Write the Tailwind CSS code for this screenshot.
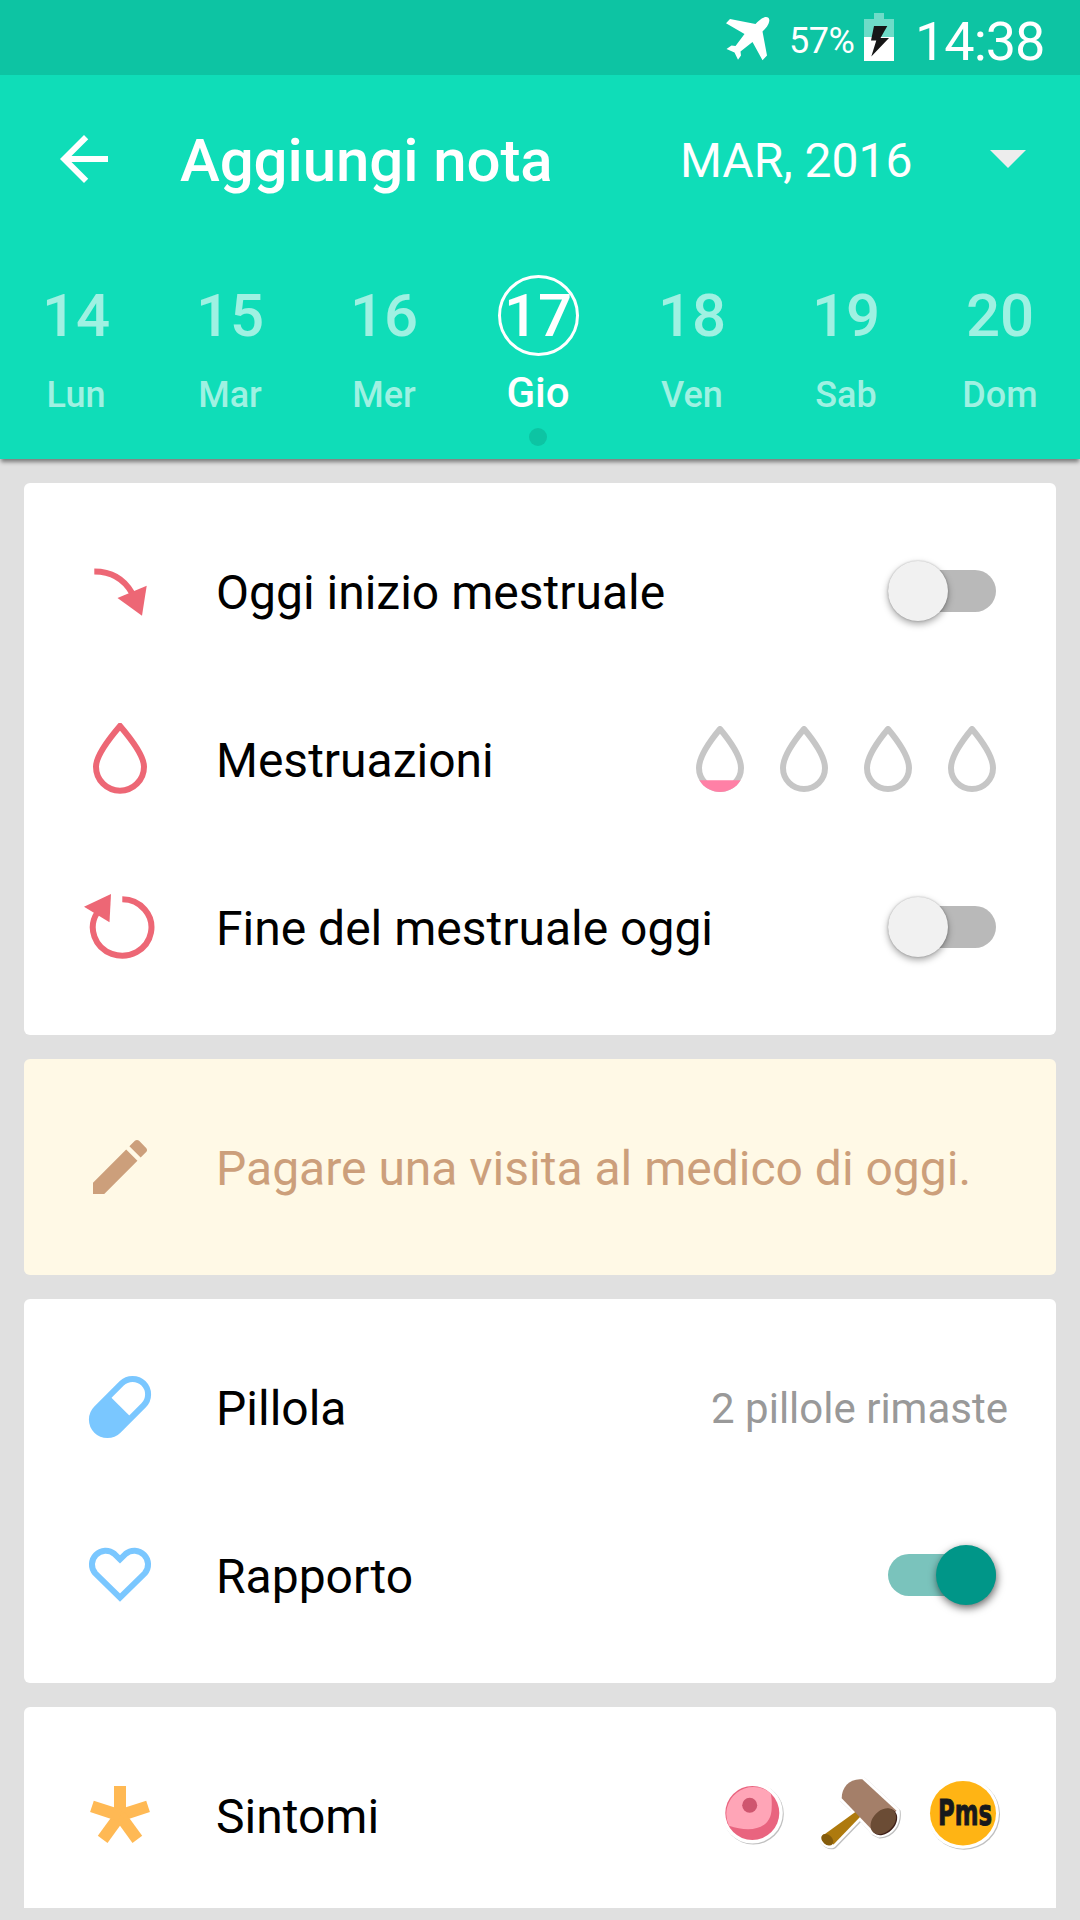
<!DOCTYPE html>
<html lang="it">
<head>
    <meta charset="UTF-8">
    <meta name="viewport" content="width=device-width, initial-scale=1.0">
    <title>Aggiungi nota</title>
    <script src="https://cdn.jsdelivr.net/npm/@tailwindcss/browser@4"></script>
    <style>
        body {
            font-family: Roboto, 'Noto Sans', sans-serif;
        }
    </style>
</head>
<body class="bg-[#e0e0e0] w-[1080px] h-[1920px] overflow-hidden text-black">
    <!-- Goccia condivisa -->
    <svg width="0" height="0" class="absolute">
        <symbol id="goccia" viewBox="0 0 48 66">
            <path d="M24 3C19 9 3 29 3 42A21 21 0 0 0 45 42C45 29 29 9 24 3Z" fill="none" stroke="#c6c6c6" stroke-width="6" stroke-linejoin="round"/>
        </symbol>
    </svg>

    <!-- Barra di stato -->
    <div class="bg-[#0dc4a3] h-[75px] flex items-start text-white pl-[726px]">
        <svg class="w-[44px] h-[44px] mt-[17px]" viewBox="0 0 44 44" fill="#fff">
            <path d="M0 6.300L4 2L29.500 7C32 4.500 35 1.500 38 .5C41 -.7 43.800 .8 43.300 4C42.800 8 40 11 36.500 14.500L41 38.500L36.500 43.300L26.500 25L14.500 34.500L15 38.500L12 42.700L8.500 35.500L.5 32L5.500 28.500L9.500 29L18.500 17L0 6.300Z"/>
        </svg>
        <span class="text-[36px] leading-[42px] tracking-[-0.5px] mt-[20px] ml-[19px] w-[75px]">57%</span>
        <svg class="w-[30px] h-[48px] mt-[13px]" viewBox="0 0 30 48">
            <path d="M10 0H20V6H30V24H0V6H10Z" fill="#6edcc8"/>
            <path d="M0 24H30V48H0Z" fill="#fff"/>
            <path d="M10 13H23.300L16.500 25H25L7.300 43.500L12.300 27.500H7Z" fill="#161616"/>
        </svg>
        <span class="text-[54px] leading-[64px] tracking-[-1px] mt-[10px] ml-[21px]">14:38</span>
    </div>

    <!-- Intestazione -->
    <header class="bg-[#0fddb8] h-[384px] text-white shadow-[0_4px_4px_-1px_rgba(0,0,0,0.45)]">
        <div class="h-[168px] flex items-center pl-[48px]">
            <svg class="w-[72px] h-[72px]" viewBox="0 0 24 24" fill="#fff">
                <path d="M20 11H7.830l5.590-5.590L12 4l-8 8 8 8 1.410-1.410L7.830 13H20v-2z"/>
            </svg>
            <h1 class="text-[60px] font-medium tracking-[-0.1px] ml-[60px] w-[500px] pt-[4px]">Aggiungi nota</h1>
            <span class="text-[48px] w-[310px] pt-[4px]">MAR, 2016</span>
            <svg class="w-[36px] h-[18px]" viewBox="0 0 36 18" fill="#ededed">
                <path d="M0 0H36L18 18Z"/>
            </svg>
        </div>

        <div class="flex pt-[32px] -ml-px text-[#9ff1e2] font-medium text-[36px]">
            <div class="w-[154px] flex flex-col items-center">
                <div class="size-[81px] flex items-center justify-center text-[60px]">14</div>
                <div class="mt-[15px] leading-[48px]">Lun</div>
            </div>
            <div class="w-[154px] flex flex-col items-center">
                <div class="size-[81px] flex items-center justify-center text-[60px]">15</div>
                <div class="mt-[15px] leading-[48px]">Mar</div>
            </div>
            <div class="w-[154px] flex flex-col items-center">
                <div class="size-[81px] flex items-center justify-center text-[60px]">16</div>
                <div class="mt-[15px] leading-[48px]">Mer</div>
            </div>
            <div class="w-[154px] flex flex-col items-center text-white">
                <div class="size-[81px] rounded-full border-[3px] border-white flex items-center justify-center text-[60px]">17</div>
                <div class="mt-[13px] leading-[48px] text-[42px]">Gio</div>
                <div class="mt-[11px] size-[18px] rounded-full bg-[#0dc4a3]"></div>
            </div>
            <div class="w-[154px] flex flex-col items-center">
                <div class="size-[81px] flex items-center justify-center text-[60px]">18</div>
                <div class="mt-[15px] leading-[48px]">Ven</div>
            </div>
            <div class="w-[154px] flex flex-col items-center">
                <div class="size-[81px] flex items-center justify-center text-[60px]">19</div>
                <div class="mt-[15px] leading-[48px]">Sab</div>
            </div>
            <div class="w-[154px] flex flex-col items-center">
                <div class="size-[81px] flex items-center justify-center text-[60px]">20</div>
                <div class="mt-[15px] leading-[48px]">Dom</div>
            </div>
        </div>
    </header>

    <main class="px-6 pt-6 flex flex-col gap-6 text-[48px]">
        <!-- Ciclo -->
        <section class="bg-white rounded-[6px] py-6">
            <div class="h-[168px] flex items-center pl-[60px] pr-[60px]">
                <svg class="w-[72px] h-[72px]" viewBox="0 0 72 72">
                    <path d="M10.300 16.500C27 16.500 40 24 48 38" fill="none" stroke="#ed6775" stroke-width="6"/>
                    <path d="M33.500 43L62.700 30.700L58 60.700Z" fill="#ed6775"/>
                </svg>
                <span class="ml-[60px] pt-[3px] flex-1">Oggi inizio mestruale</span>
                <div class="w-[108px] h-[42px] rounded-full bg-[#b9b9b9] flex items-center">
                    <div class="size-[60px] shrink-0 rounded-full bg-[#f1f1f1] shadow-[0_3px_7px_rgba(0,0,0,0.35),0_0_2px_rgba(0,0,0,0.25)]"></div>
                </div>
            </div>
            <div class="h-[168px] flex items-center pl-[60px] pr-[60px]">
                <svg class="w-[72px] h-[72px]" viewBox="0 0 72 72">
                    <path d="M36 3C30 10 12 31 12 43.700A24 24 0 0 0 60 43.700C60 31 42 10 36 3Z" fill="none" stroke="#ed6775" stroke-width="6"/>
                </svg>
                <span class="ml-[60px] pt-[3px] flex-1">Mestruazioni</span>
                <div class="flex gap-9">
                    <svg class="w-[48px] h-[66px]" viewBox="0 0 48 66">
                        <use href="#goccia"/>
                        <path d="M3.400 54.300H44.600A24 24 0 0 1 3.400 54.300Z" fill="#ff80a6"/>
                    </svg>
                    <svg class="w-[48px] h-[66px]"><use href="#goccia"/></svg>
                    <svg class="w-[48px] h-[66px]"><use href="#goccia"/></svg>
                    <svg class="w-[48px] h-[66px]"><use href="#goccia"/></svg>
                </div>
            </div>
            <div class="h-[168px] flex items-center pl-[60px] pr-[60px]">
                <svg class="w-[72px] h-[72px]" viewBox="0 0 72 72">
                    <path d="M38.300 8.300A29.300 28.200 0 1 1 13 22" fill="none" stroke="#ed6775" stroke-width="6"/>
                    <path d="M0 15.700L27 3L25.500 31.300Z" fill="#ed6775"/>
                </svg>
                <span class="ml-[60px] pt-[3px] flex-1">Fine del mestruale oggi</span>
                <div class="w-[108px] h-[42px] rounded-full bg-[#b9b9b9] flex items-center">
                    <div class="size-[60px] shrink-0 rounded-full bg-[#f1f1f1] shadow-[0_3px_7px_rgba(0,0,0,0.35),0_0_2px_rgba(0,0,0,0.25)]"></div>
                </div>
            </div>
        </section>

        <!-- Nota -->
        <section class="bg-[#fff9e6] rounded-[6px] py-6">
            <div class="h-[168px] flex items-center pl-[60px] text-[#cc9f7b]">
                <svg class="w-[72px] h-[72px]" viewBox="0 0 24 24" fill="currentColor">
                    <path d="M3 17.250V21h3.750L17.810 9.940l-3.750-3.750L3 17.250zM20.710 7.040c.39-.39.39-1.020 0-1.410l-2.340-2.340c-.39-.39-1.020-.39-1.410 0l-1.830 1.830 3.750 3.750 1.830-1.830z"/>
                </svg>
                <span class="ml-[60px] pt-[3px] whitespace-nowrap">Pagare una visita al medico di oggi.</span>
            </div>
        </section>

        <!-- Pillola e rapporto -->
        <section class="bg-white rounded-[6px] py-6">
            <div class="h-[168px] flex items-center pl-[60px] pr-[48px]">
                <svg class="w-[72px] h-[72px]" viewBox="0 0 72 72">
                    <g transform="translate(36 36) rotate(-45)">
                        <rect x="-33.300" y="-15.500" width="66.600" height="31" rx="15.500" fill="none" stroke="#7ac7ff" stroke-width="6"/>
                        <path d="M.5 -15.500H-17.800A15.500 15.500 0 0 0 -17.800 15.500H.5Z" fill="#7ac7ff"/>
                    </g>
                </svg>
                <span class="ml-[60px] pt-[3px] flex-1">Pillola</span>
                <span class="text-[42px] text-[#999] pt-[3px]">2 pillole rimaste</span>
            </div>
            <div class="h-[168px] flex items-center pl-[60px] pr-[60px]">
                <svg class="w-[72px] h-[72px]" viewBox="0 0 72 72">
                    <path d="M36 20.300L30.400 14.900A13.700 13.700 0 0 0 11.200 34.300L36 58.600L60.800 34.300A13.700 13.700 0 0 0 41.600 14.900Z" fill="none" stroke="#7ac7ff" stroke-width="6"/>
                </svg>
                <span class="ml-[60px] pt-[3px] flex-1">Rapporto</span>
                <div class="w-[108px] h-[42px] rounded-full bg-[#7ac3bc] flex items-center justify-end">
                    <div class="size-[60px] shrink-0 rounded-full bg-[#009688] shadow-[1px_3px_8px_rgba(0,0,0,0.6)]"></div>
                </div>
            </div>
        </section>

        <!-- Sintomi -->
        <section class="bg-white rounded-t-[6px] pt-6 h-[201px]">
            <div class="h-[168px] flex items-center pl-[60px] pr-[48px]">
                <svg class="w-[72px] h-[72px]" viewBox="0 0 72 72">
                    <g stroke="#ffb954" stroke-width="12">
                        <path d="M36 36.500V7"/>
                        <path d="M36 36.500V7" transform="rotate(72 36 36.500)"/>
                        <path d="M36 36.500V7" transform="rotate(144 36 36.500)"/>
                        <path d="M36 36.500V7" transform="rotate(216 36 36.500)"/>
                        <path d="M36 36.500V7" transform="rotate(288 36 36.500)"/>
                    </g>
                </svg>
                <span class="ml-[60px] pt-[3px] flex-1">Sintomi</span>
                <div class="flex gap-[21px]">
                    <!-- Brufolo -->
                    <svg class="w-[84px] h-[84px]" viewBox="0 0 84 84">
                        <circle cx="38.300" cy="40" r="30.500" fill="#fff" class="drop-shadow-[1px_1.5px_0.7px_rgba(0,0,0,0.25)]"/>
                        <circle cx="38.300" cy="40" r="27" fill="#e9647f"/>
                        <path d="M56.700 20.300A27 27 0 0 0 15 52.700C36 60 58 57 57.700 34C58 28 57.500 24 56.700 20.300Z" fill="#ffa5b7"/>
                        <circle cx="35.700" cy="32.300" r="7.500" fill="#cf566f"/>
                    </svg>
                    <!-- Martello -->
                    <svg class="w-[84px] h-[84px] overflow-visible" viewBox="0 0 84 84">
                        <path d="M22.700 25.300C22.500 14 31 5 43.300 6.300L77.700 37.700C79 50 72 61 60 61.500L54.300 58.700L41 43.700L14 71.700Q9 74 2.700 67L2.700 63.700L36.700 38.700Z" fill="#fff" stroke="#fff" stroke-width="6" stroke-linejoin="round" class="drop-shadow-[1px_1.5px_0.7px_rgba(0,0,0,0.25)]"/>
                        <path d="M36.700 38.700Q40 38 41 44L14.500 71.500L2.500 63.500Z" fill="#ae7a0e"/>
                        <ellipse cx="8.300" cy="66.800" rx="6.800" ry="4.800" transform="rotate(40 8.300 66.800)" fill="#855c0b"/>
                        <path d="M22.700 25.300C22.500 14 31 5 43.300 6.300L77.500 37.700L56 60Z" fill="#a47f69"/>
                        <ellipse cx="65.200" cy="49" rx="15" ry="10.800" transform="rotate(-46 65.200 49)" fill="#3f1f18"/>
                        <ellipse cx="64.300" cy="48.300" rx="14.800" ry="10.500" transform="rotate(-46 64.300 48.300)" fill="#6b4c35"/>
                    </svg>
                    <!-- PMS -->
                    <svg class="w-[84px] h-[84px]" viewBox="0 0 84 84">
                        <ellipse cx="39" cy="40.300" rx="36" ry="35.500" fill="#fff" class="drop-shadow-[1px_1.5px_0.7px_rgba(0,0,0,0.25)]"/>
                        <ellipse cx="39" cy="40.300" rx="33" ry="32.200" fill="#ffb414"/>
                        <text x="14" y="51.500" textLength="54" lengthAdjust="spacingAndGlyphs" font-family="DejaVu Sans, sans-serif" font-weight="700" font-size="36" fill="#17191c" stroke="#17191c" stroke-width="1">Pms</text>
                    </svg>
                </div>
            </div>
        </section>
    </main>
</body>
</html>
